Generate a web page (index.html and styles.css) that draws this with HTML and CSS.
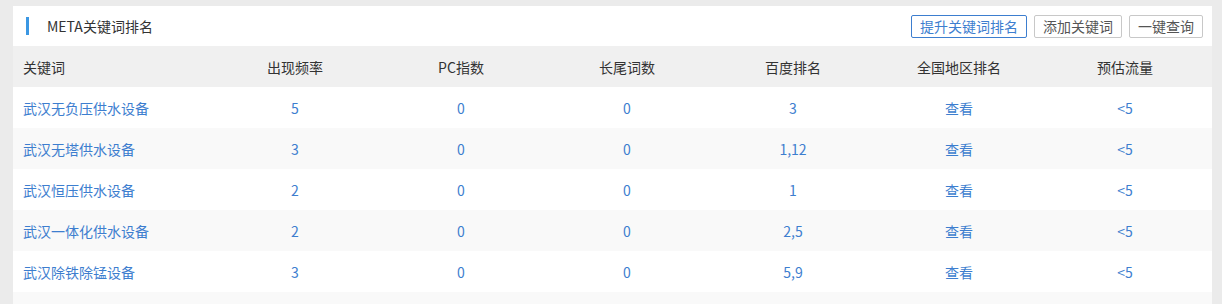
FILE: index.html
```html
<!DOCTYPE html>
<html lang="zh-CN">
<head>
<meta charset="utf-8">
<title>META关键词排名</title>
<link rel="stylesheet" href="styles.css">
</head>
<body>
<div class="card">
  <div class="card-head">
    <div class="title"><span class="bar"></span>META关键词排名</div>
    <div class="actions">
      <button class="btn btn-primary">提升关键词排名</button>
      <button class="btn">添加关键词</button>
      <button class="btn">一键查询</button>
    </div>
  </div>
  <table class="rank-table">
    <thead>
      <tr>
        <th class="col-kw">关键词</th>
        <th>出现频率</th>
        <th>PC指数</th>
        <th>长尾词数</th>
        <th>百度排名</th>
        <th>全国地区排名</th>
        <th class="col-last">预估流量</th>
      </tr>
    </thead>
    <tbody>
      <tr><td class="col-kw">武汉无负压供水设备</td><td>5</td><td>0</td><td>0</td><td>3</td><td>查看</td><td class="col-last">&lt;5</td></tr>
      <tr><td class="col-kw">武汉无塔供水设备</td><td>3</td><td>0</td><td>0</td><td>1,12</td><td>查看</td><td class="col-last">&lt;5</td></tr>
      <tr><td class="col-kw">武汉恒压供水设备</td><td>2</td><td>0</td><td>0</td><td>1</td><td>查看</td><td class="col-last">&lt;5</td></tr>
      <tr><td class="col-kw">武汉一体化供水设备</td><td>2</td><td>0</td><td>0</td><td>2,5</td><td>查看</td><td class="col-last">&lt;5</td></tr>
      <tr><td class="col-kw">武汉除铁除锰设备</td><td>3</td><td>0</td><td>0</td><td>5,9</td><td>查看</td><td class="col-last">&lt;5</td></tr>
      <tr class="empty"><td class="col-kw"></td><td></td><td></td><td></td><td></td><td></td><td class="col-last"></td></tr>
    </tbody>
  </table>
</div>
</body>
</html>
```

FILE: styles.css
```css
* { box-sizing: border-box; }
html, body { margin: 0; padding: 0; }
body {
  background: #ebebeb;
  font-family: "Noto Sans CJK SC", "Microsoft YaHei", sans-serif;
  font-size: 14px;
  color: #333;
  padding: 6px 10px 0 13px;
}
.card {
  width: 1199px;
  height: 298px;
  overflow: hidden;
  background: #fff;
}
.card-head {
  height: 40px;
  display: flex;
  align-items: center;
  justify-content: space-between;
  padding: 0 9px 0 13px;
}
.title {
  display: flex;
  align-items: center;
  font-size: 14px;
  color: #333;
  line-height: 18px;
}
.bar {
  display: inline-block;
  width: 3px;
  height: 18px;
  background: #3b97e3;
  margin-right: 18px;
}
.actions {
  display: flex;
  gap: 7px;
}
.btn {
  height: 23px;
  padding: 0 8px;
  font-family: inherit;
  font-size: 14px;
  line-height: 21px;
  background: #fff;
  color: #555;
  border: 1px solid #c8c8c8;
  border-radius: 2px;
}
.btn-primary {
  color: #3d7ecf;
  border-color: #3d7ecf;
}
.rank-table {
  width: 1199px;
  border-collapse: collapse;
  table-layout: fixed;
}
.rank-table th,
.rank-table td {
  height: 41px;
  padding: 0;
  text-align: center;
  font-weight: normal;
  width: 166px;
}
.rank-table th.col-kw,
.rank-table td.col-kw {
  width: 199px;
  text-align: left;
  padding-left: 10px;
}
.rank-table th.col-last,
.rank-table td.col-last {
  width: 170px;
  padding-right: 4px;
}
.rank-table thead tr { background: #f0f0f0; }
.rank-table th { color: #333; }
.rank-table td { color: #3d7ecf; }
.rank-table tbody tr:nth-child(even) { background: #f9f9f9; }
```
